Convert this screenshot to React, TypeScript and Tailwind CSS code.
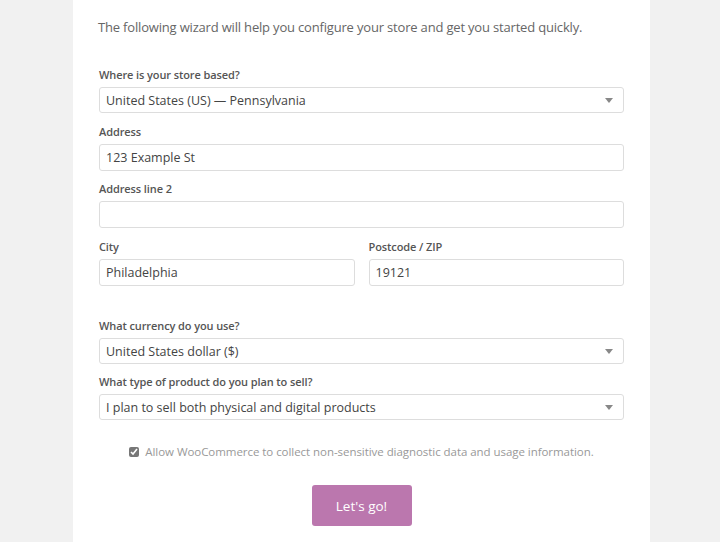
import { useState } from 'react'

const font = { fontFamily: '"Open Sans", "Noto Sans", sans-serif' }

function Label({ children }: { children: React.ReactNode }) {
  return <div className="text-[11px] font-semibold text-[#555] leading-none mb-[7px] tracking-[-0.1px]">{children}</div>
}

function Field({ value }: { value: string }) {
  return (
    <div className="h-[27px] w-full rounded-[3px] border border-[#ddd] bg-white px-[6px] pt-[2px] flex items-center text-[12.5px] text-[#444]">
      {value}
    </div>
  )
}

function Select({ value }: { value: string }) {
  return (
    <div className="h-[26px] w-full rounded-[3px] border border-[#ddd] bg-white pl-[6px] pr-[10px] flex items-center justify-between text-[12.5px] text-[#444]">
      <span className="pt-[2px]">{value}</span>
      <span className="w-0 h-0 border-l-[4px] border-r-[4px] border-t-[5px] border-l-transparent border-r-transparent border-t-[#888]" />
    </div>
  )
}

export default function App() {
  const [checked, setChecked] = useState(true)

  return (
    <div className="h-[542px] overflow-hidden bg-[#f1f1f1] pl-[73px]" style={font}>
      <div className="w-[577px] h-[542px] bg-white px-[26px] pt-[18px]">
        <p className="text-[13px] text-[#666] leading-[18px] -ml-px tracking-[-0.18px]">
          The following wizard will help you configure your store and get you started quickly.
        </p>

        <div className="mt-[33px]">
          <Label>Where is your store based?</Label>
          <Select value="United States (US) — Pennsylvania" />
        </div>

        <div className="mt-[13px]">
          <Label>Address</Label>
          <Field value="123 Example St" />
        </div>

        <div className="mt-[12px]">
          <Label>Address line 2</Label>
          <Field value="" />
        </div>

        <div className="mt-[13px] flex gap-[14px]">
          <div className="flex-1">
            <Label>City</Label>
            <Field value="Philadelphia" />
          </div>
          <div className="flex-1">
            <Label>Postcode / ZIP</Label>
            <Field value="19121" />
          </div>
        </div>

        <div className="mt-[34px]">
          <Label>What currency do you use?</Label>
          <Select value="United States dollar ($)" />
        </div>

        <div className="mt-[12px]">
          <Label>What type of product do you plan to sell?</Label>
          <Select value="I plan to sell both physical and digital products" />
        </div>

        <label className="mt-[23px] flex items-center justify-center gap-[6px] text-[11.5px] text-[#999] tracking-[-0.05px]">
          <input
            type="checkbox"
            checked={checked}
            onChange={() => setChecked(!checked)}
            className="w-[10px] h-[10px] accent-[#777]"
          />
          Allow WooCommerce to collect non-sensitive diagnostic data and usage information.
        </label>

        <div className="mt-[25px] flex justify-center">
          <button className="w-[100px] h-[41px] rounded-[3px] bg-[#bb77ae] text-[13.5px] text-white">
            Let's go!
          </button>
        </div>
      </div>
    </div>
  )
}
